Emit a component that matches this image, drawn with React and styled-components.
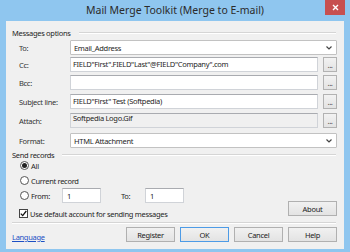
import React from 'react';
import styled, { createGlobalStyle } from 'styled-components';

const Global = createGlobalStyle`
    html, body {
        margin: 0;
        padding: 0;
        background: #ffffff;
    }
    * {
        box-sizing: border-box;
    }
`;

const StyledWindow = styled.div`
    width: 350px;
    height: 252px;
    background: #8fc6ef;
    display: flex;
    flex-direction: column;
    font-family: "Noto Sans", "Open Sans", sans-serif;
    font-size: 7.5px;
    letter-spacing: -0.3px;
    color: #1e1e1e;
    overflow: hidden;
`;
const TitleBar = styled.div`
    height: 21px;
    flex-shrink: 0;
    display: grid;
    grid-template-columns: 1fr auto 1fr;
    align-items: start;

    h1{
        margin: 0;
        padding-top: 3px;
        font-size: 10.5px;
        font-weight: normal;
        letter-spacing: 0;
        color: #2b2b2b;
        white-space: nowrap;
    }
`;
const CloseButton = styled.div`
    justify-self: end;
    width: 20px;
    height: 15px;
    margin-right: 5px;
    background: #c75050;
    display: flex;
    align-items: center;
    justify-content: center;
`;
const Client = styled.div`
    height: 228px;
    margin: 0 6px;
    background: #f0f0f0;
    padding: 7px 7px 7px 6px;
    display: flex;
    flex-direction: column;
`;
const SectionTitle = styled.div`
    display: flex;
    align-items: center;
    height: 10px;
    margin-top: ${p => p.top || 0}px;

    span{
        white-space: nowrap;
        margin-right: 8px;
    }

    &::after{
        content: "";
        flex: 1;
        border-top: 1px solid #d5d5d5;
        border-bottom: 1px solid #ffffff;
        margin-right: 1px;
    }
`;
const Row = styled.div`
    display: flex;
    align-items: center;
    height: 15px;
    padding-left: 7px;
    margin-top: ${p => p.top || 0}px;
`;
const Label = styled.div`
    width: 51px;
    color: #333;
    white-space: nowrap;
`;
const Field = styled.div`
    flex: 1;
    height: 15px;
    display: flex;
    align-items: center;
    padding: 0 2px;
    background: ${p => (p.readOnly ? '#f0f0f0' : '#ffffff')};
    border: 1px solid #d0d3d8;
    border-top-color: #a9abb0;
    white-space: nowrap;
    overflow: hidden;
    line-height: 1;
    ${p => p.readOnly && 'align-items: flex-start; padding-top: 1px;'}
`;
const Combo = styled.div`
    flex: 1;
    height: 15px;
    display: flex;
    align-items: center;
    justify-content: space-between;
    padding: 0 4px 0 3px;
    background: #ffffff;
    border: 1px solid #c2c2c2;
    border-radius: 1px;
`;
const DotsButton = styled.div`
    width: 14px;
    height: 15px;
    margin-left: 5px;
    background: linear-gradient(#f2f2f2, #e3e3e3);
    border: 1px solid #b2b2b2;
    display: flex;
    align-items: center;
    justify-content: center;
    font-size: 8px;
    color: #444;
    letter-spacing: -0.5px;
    line-height: 1;
`;
const Records = styled.div`
    display: flex;
    justify-content: space-between;
    align-items: flex-end;
    margin-top: -2px;
`;
const Options = styled.div`
    display: flex;
    flex-direction: column;
`;
const Option = styled.div`
    display: flex;
    align-items: center;
    height: 15px;
    padding-left: ${p => p.indent || 8}px;
    margin-top: ${p => p.top || 0}px;
`;
const RangeRow = styled.div`
    display: grid;
    grid-template-columns: 11px 31px 39px 20px 24px 39px;
    align-items: center;
    height: 15px;
    padding-left: 8px;
`;
const Radio = styled.span`
    width: 9px;
    height: 9px;
    border-radius: 50%;
    border: 1px solid #555;
    background: #fff;
    margin-right: 2px;
    display: flex;
    align-items: center;
    justify-content: center;

    &::after{
        content: "";
        width: 5px;
        height: 5px;
        border-radius: 50%;
        background: ${p => (p.checked ? '#222' : 'transparent')};
    }
`;
const Check = styled.span`
    width: 9px;
    height: 9px;
    border: 1px solid #444;
    background: #fff;
    margin-right: 2px;
    display: flex;
    align-items: center;
    justify-content: center;
`;
const SmallBox = styled.div`
    height: 15px;
    background: #fff;
    border: 1px solid #d0d3d8;
    border-top-color: #a9abb0;
    padding-left: 4px;
    display: flex;
    align-items: center;
`;
const Button = styled.div`
    width: 49px;
    height: 15px;
    flex-shrink: 0;
    background: linear-gradient(#f1f1f1, #e3e3e3);
    border: 1px solid ${p => (p.primary ? '#4d9be6' : '#b0b0b0')};
    display: flex;
    align-items: center;
    justify-content: center;
    color: #222;
    margin-bottom: ${p => p.bottom || 0}px;
`;
const Separator = styled.div`
    margin-top: 1px;
    margin-right: 1px;
    border-top: 1px solid #d5d5d5;
    border-bottom: 1px solid #ffffff;
`;
const Footer = styled.div`
    display: flex;
    align-items: center;
    margin-top: 3px;
    gap: 5px;
`;
const Link = styled.a`
    flex: 1;
    color: #1c4fc4;
    text-decoration: underline;
    padding-top: 5px;
`;

const Chevron = () => (
    <svg width="6" height="4" viewBox="0 0 6 4">
        <path d="M0.5 0.5 L3 3 L5.5 0.5" fill="none" stroke="#444" strokeWidth="1.2" />
    </svg>
);

const App = () => {
    return (
        <StyledWindow>
            <Global />
            <TitleBar>
                <div />
                <h1>Mail Merge Toolkit (Merge to E-mail)</h1>
                <CloseButton>
                    <svg width="7" height="7" viewBox="0 0 7 7">
                        <path d="M1 1 L6 6 M6 1 L1 6" stroke="#fff" strokeWidth="1.4" />
                    </svg>
                </CloseButton>
            </TitleBar>
            <Client>
                <SectionTitle><span>Messages options</span></SectionTitle>
                <Row top={2}>
                    <Label>To:</Label>
                    <Combo>Email_Address<Chevron /></Combo>
                </Row>
                <Row top={2}>
                    <Label>Cc:</Label>
                    <Field>FIELD"First".FIELD"Last"@FIELD"Company".com</Field>
                    <DotsButton>...</DotsButton>
                </Row>
                <Row top={3}>
                    <Label>Bcc:</Label>
                    <Field />
                    <DotsButton>...</DotsButton>
                </Row>
                <Row top={4}>
                    <Label>Subject line:</Label>
                    <Field>FIELD"First" Test (Softpedia)</Field>
                    <DotsButton>...</DotsButton>
                </Row>
                <Row top={4}>
                    <Label>Attach:</Label>
                    <Field readOnly>Softpedia Logo.Gif</Field>
                    <DotsButton>...</DotsButton>
                </Row>
                <Row top={5}>
                    <Label>Format:</Label>
                    <Combo>HTML Attachment<Chevron /></Combo>
                </Row>
                <SectionTitle top={2}><span>Send records</span></SectionTitle>
                <Records>
                    <Options>
                        <Option><Radio checked />All</Option>
                        <Option><Radio />Current record</Option>
                        <RangeRow>
                            <Radio />
                            <span>From:</span>
                            <SmallBox>1</SmallBox>
                            <span />
                            <span>To:</span>
                            <SmallBox>1</SmallBox>
                        </RangeRow>
                        <Option top={3} indent={7}>
                            <Check>
                                <svg width="7" height="7" viewBox="0 0 7 7">
                                    <path d="M0.8 3.6 L2.7 5.6 L6.3 1" fill="none" stroke="#111" strokeWidth="1.3" />
                                </svg>
                            </Check>
                            Use default account for sending messages
                        </Option>
                    </Options>
                    <Button bottom={5}>About</Button>
                </Records>
                <Separator />
                <Footer>
                    <Link>Language</Link>
                    <Button>Register</Button>
                    <Button primary>OK</Button>
                    <Button>Cancel</Button>
                    <Button>Help</Button>
                </Footer>
            </Client>
        </StyledWindow>
    );
}

export default App;
